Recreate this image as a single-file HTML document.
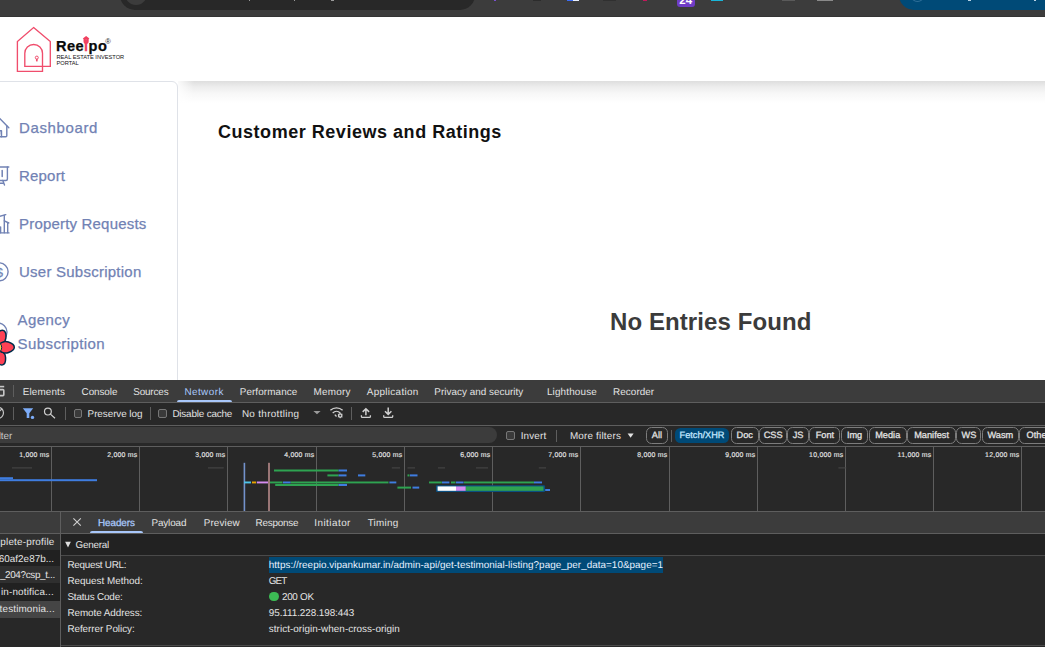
<!DOCTYPE html>
<html><head><meta charset="utf-8"><title>Reeipo</title>
<style>
*{box-sizing:border-box;margin:0;padding:0}
html,body{width:1045px;height:647px;overflow:hidden;background:#fff}
body{position:relative;font-family:"Liberation Sans",sans-serif}
.abs{position:absolute}
.t{position:absolute;white-space:nowrap;line-height:1}
/* browser chrome */
#chrome{left:0;top:0;width:1045px;height:17px;background:#3c3c3c;border-bottom:1px solid #343434;overflow:hidden}
#omni{left:120px;top:-20px;width:355px;height:30px;border-radius:15px;background:#282828}
#site{left:125px;top:-17px;width:22px;height:22px;border-radius:11px;background:#3c3c3c}
#profile{left:899px;top:-20px;width:170px;height:30px;border-radius:15px;background:#004a77}
/* page */
#header{left:0;top:17px;width:1045px;height:64px;background:#fff}
#main{left:178px;top:81px;width:867px;height:299px;background:#fff}
#shadow{left:178px;top:81px;width:867px;height:22px;background:linear-gradient(to right,rgba(255,255,255,.85),rgba(255,255,255,0) 16px),linear-gradient(#dedede,#ececec 25%,#f7f7f7 55%,#fff)}
#side{left:-2px;top:81px;width:180px;height:305px;background:#fff;border:1px solid #dfe2e8;border-radius:0 6px 0 0}
.nav{color:#7182b4;font-size:15px;-webkit-text-stroke:.25px #7182b4}
/* devtools */
#dt{left:0;top:380px;width:1045px;height:267px;background:#282828;color:#e3e3e3;font-size:9.9px;letter-spacing:0;overflow:hidden;text-rendering:geometricPrecision}
#dt .t{color:#e3e3e3}
.pill{border-radius:5.5px;font-weight:400;-webkit-text-stroke:.28px currentColor;font-size:9.2px;letter-spacing:0;line-height:14.6px;white-space:nowrap;overflow:hidden}
.tick{text-align:right;font-size:6.9px;letter-spacing:.25px;line-height:8px;-webkit-text-stroke:.15px #e3e3e3}
</style></head><body>
<div class="abs" id="chrome"><div class="abs" id="omni"></div><div class="abs" id="site"></div><div class="abs" id="profile"></div>
<div class="abs" style="left:248.5px;top:0;width:1.6px;height:1px;background:#9a9a9a"></div><div class="abs" style="left:293.5px;top:0;width:1.6px;height:1px;background:#9a9a9a"></div><div class="abs" style="left:330.5px;top:0;width:3px;height:1px;background:#9a9a9a"></div>
<div class="abs" style="left:967.5px;top:0;width:3px;height:1.4px;background:#b9d3e4"></div><div class="abs" style="left:1034px;top:0;width:2px;height:1.4px;background:#b9d3e4"></div>
<div class="abs" style="left:911px;top:-10px;width:13px;height:12px;border-radius:50%;border:1px solid #2f6f98"></div>
<div class="abs" style="left:494px;top:0;width:2px;height:1px;background:#7a4fd0"></div><div class="abs" style="left:533px;top:0;width:8px;height:1px;background:#2c2c2c"></div><div class="abs" style="left:603px;top:0;width:13px;height:1px;background:#303030"></div>
<div class="abs" style="left:677px;top:-8px;width:18px;height:14.5px;border-radius:3px;background:#6f3cc6"></div>
<div class="t" style="left:679.3px;top:-4.9px;font-size:11.5px;font-weight:700;color:#fff">24</div>
<div class="abs" style="left:567px;top:0;width:6px;height:1px;background:#3b6cf6"></div><div class="abs" style="left:573px;top:0;width:6px;height:1px;background:#e8eefc"></div>
<div class="abs" style="left:643px;top:0;width:4px;height:1px;background:#c2185b"></div>
<div class="abs" style="left:711px;top:0;width:12px;height:1px;background:#19b5d8"></div>
<div class="abs" style="left:782px;top:0;width:13px;height:1px;background:#5a5a5a"></div>
<div class="abs" style="left:817px;top:0;width:16px;height:1px;background:#8a8a8a"></div>
</div>
<div class="abs" id="header"></div>
<div class="abs" id="main"></div>
<div class="abs" id="shadow"></div>
<div class="abs" id="side"></div>
<!--LOGO-->
<svg class="abs" style="left:0;top:17px" width="180" height="64" viewBox="0 17 180 64">
<path d="M33.6 27.6 L50.3 41.5 V66.4 H24.8 V53.3 A8.85 8.85 0 0 1 42.5 53.3 V71.3 H17.4 V41.5 Z" fill="none" stroke="#f04d6c" stroke-width="1.35" stroke-linejoin="miter"/>
<circle cx="36.8" cy="57.6" r="1.5" fill="none" stroke="#f04d6c" stroke-width="1"/>
<path d="M36.8 59 V61.4" stroke="#f04d6c" stroke-width="1.7"/>
<path d="M86.1 35.9 L89.4 38.5 L88.7 38.9 V41.2 a2.6 2.6 0 0 1 -5.2 0 V38.9 L82.8 38.5 Z" fill="#f0405f"/>
<rect x="85.5" y="39.6" width="1.2" height="1.6" rx=".4" fill="#f9a9b8"/>
</svg>
<div class="t" style="left:56px;top:38.5px;font-size:14.6px;font-weight:700;color:#0a0a0a;letter-spacing:.43px;-webkit-text-stroke:.25px #0a0a0a">Ree<span style="color:#f0405f;-webkit-text-stroke:.25px #f0405f">i</span>po</div>
<div class="t" style="left:105.3px;top:37.8px;font-size:7.5px;color:#222">®</div>
<div class="t" style="left:56.5px;top:55px;font-size:5.7px;color:#111;letter-spacing:-.02px">REAL ESTATE INVESTOR</div>
<div class="t" style="left:56.5px;top:61px;font-size:5.7px;color:#111">PORTAL</div>
<!--/LOGO-->
<!--NAV-->
<svg class="abs" style="left:0;top:110px" width="16" height="280" viewBox="0 110 16 280" fill="none" stroke="#7182b4" stroke-width="1.4" stroke-linecap="round" stroke-linejoin="round">
<path d="M-1 117.8 L8.8 127.8"/><path d="M6.8 126 V135.8 a1 1 0 0 1 -1 1 H-1"/><path d="M-1 130.7 H1.5 V136.8" fill="#cfd5e6"/>
<path d="M-1 167 H8.8"/><path d="M7.4 167 V179 a1.5 1.5 0 0 1 -1.5 1.5 H-1"/><path d="M2.2 170.6 V176.4" stroke-width="1.5"/><path d="M2.8 180.5 L4.5 185"/><path d="M-1 183.2 H3.5"/>
<path d="M-1 216.6 L5.8 214.7"/><path d="M4.3 215.3 V232.8"/><path d="M4.3 220.8 L8.8 223"/><path d="M7.7 222.6 V232.8"/><path d="M-1 232.9 H9"/><path d="M.6 227 V232.8"/>
<circle cx="-.9" cy="271.8" r="9"/>
<circle cx="-2" cy="332" r="9"/>
</svg>
<div class="t" style="left:-4.3px;top:265.6px;font-size:13px;color:#7182b4;-webkit-text-stroke:.3px #7182b4">$</div>
<div class="t nav" style="left:19px;top:120px;letter-spacing:.62px">Dashboard</div>
<div class="t nav" style="left:19px;top:168px;letter-spacing:.2px">Report</div>
<div class="t nav" style="left:19px;top:216px;letter-spacing:.19px">Property Requests</div>
<div class="t nav" style="left:19px;top:264px;letter-spacing:.24px">User Subscription</div>
<div class="t nav" style="left:17.6px;top:312px;letter-spacing:.4px">Agency</div>
<div class="t nav" style="left:17.6px;top:336px;letter-spacing:.41px">Subscription</div>
<svg class="abs" style="left:0;top:325px" width="20" height="46" viewBox="0 325 20 46">
<g stroke="#002b49" stroke-width="1.5" fill="#ff4154" stroke-linejoin="round">
<path d="M2,0 C4,-5 9,-6.6 13,-5.2 C17,-3.7 18.8,-1.2 18.8,0 C18.8,1.2 17,3.7 13,5.2 C9,6.6 4,5 2,0 Z" transform="translate(-4.5 347.5) rotate(-64)"/>
<path d="M2,0 C4,-5 9,-6.6 13,-5.2 C17,-3.7 18.8,-1.2 18.8,0 C18.8,1.2 17,3.7 13,5.2 C9,6.6 4,5 2,0 Z" transform="translate(-4.5 347.5) rotate(66)"/>
<path d="M2,0 C4,-5 9,-6.6 13,-5.2 C17,-3.7 18.8,-1.2 18.8,0 C18.8,1.2 17,3.7 13,5.2 C9,6.6 4,5 2,0 Z" transform="translate(-4.5 347.5) rotate(-1)"/>
</g>
<circle cx="-4.5" cy="347.5" r="6.2" fill="#ffd94c" stroke="#002b49" stroke-width="1"/>
</svg>
<!--/NAV-->
<div class="t" style="left:218px;top:123px;font-size:18px;font-weight:700;color:#111;letter-spacing:.53px">Customer Reviews and Ratings</div>
<div class="t" style="left:610px;top:310px;font-size:24px;font-weight:700;color:#3b3b3b;letter-spacing:.09px">No Entries Found</div>
<div class="abs" id="dt">
<!--DT-->
<div class="abs" style="left:0px;top:0px;width:1045px;height:22px;background:#3c3c3c;"></div>
<div class="abs" style="left:0px;top:22px;width:1045px;height:1px;background:#5e5e5e;"></div>
<svg class="abs" style="left:0;top:5px" width="6" height="14" viewBox="0 385 6 14" fill="none" stroke="#c7c7c7" stroke-width="1.6"><path d="M-2 386.6 H4.2"/><rect x="-2" y="389.6" width="5.8" height="6" rx=".8"/></svg>
<div class="abs" style="left:13px;top:5px;width:1px;height:12px;background:#5e5e5e;"></div>
<div class="t" style="left:22.70px;top:6.8px;line-height:12px;letter-spacing:0.141px;">Elements</div>
<div class="t" style="left:81.60px;top:6.8px;line-height:12px;letter-spacing:-0.076px;">Console</div>
<div class="t" style="left:133.20px;top:6.8px;line-height:12px;letter-spacing:-0.133px;">Sources</div>
<div class="t" style="left:184.40px;top:6.8px;line-height:12px;letter-spacing:0.454px;color:#a8c7fa">Network</div>
<div class="abs" style="left:176.6px;top:20px;width:55.2px;height:2px;background:#a8c7fa;border-radius:2px 2px 0 0"></div>
<div class="t" style="left:239.70px;top:6.8px;line-height:12px;letter-spacing:0.106px;">Performance</div>
<div class="t" style="left:313.40px;top:6.8px;line-height:12px;letter-spacing:0.271px;">Memory</div>
<div class="t" style="left:366.80px;top:6.8px;line-height:12px;letter-spacing:0.317px;">Application</div>
<div class="t" style="left:434.30px;top:6.8px;line-height:12px;letter-spacing:0.032px;">Privacy and security</div>
<div class="t" style="left:546.90px;top:6.8px;line-height:12px;letter-spacing:0.177px;">Lighthouse</div>
<div class="t" style="left:613.10px;top:6.8px;line-height:12px;letter-spacing:0.059px;">Recorder</div>
<div class="abs" style="left:0px;top:23px;width:1045px;height:21.5px;background:#282828;"></div>
<div class="abs" style="left:0px;top:44.5px;width:1045px;height:1px;background:#5e5e5e;"></div>
<svg class="abs" style="left:0;top:23px" width="400" height="22" viewBox="0 403 400 22" fill="none">
<circle cx="-2.2" cy="412.8" r="5.7" stroke="#c7c7c7" stroke-width="1.2"/><path d="M-6 416.5 L1.8 409" stroke="#c7c7c7" stroke-width="1.2"/>
<path d="M22.8 408.2 H33.2 L29.3 413.2 V418 H26.7 V413.2 Z" fill="#7cacf8"/><circle cx="32.5" cy="417.4" r="1.7" fill="#7cacf8"/>
<circle cx="47.9" cy="411.6" r="3.4" stroke="#d0d0d0" stroke-width="1.2"/><path d="M50.4 414.1 L55 418.3" stroke="#d0d0d0" stroke-width="1.2"/>
<path d="M313.4 411 h7.2 l-3.6 3.3 z" fill="#9a9a9a"/>
<path d="M330.4 410.2 a9 9 0 0 1 12.2 0" stroke="#d0d0d0" stroke-width="1.3"/><path d="M332.7 412.9 a5.6 5.6 0 0 1 7.6 0" stroke="#d0d0d0" stroke-width="1.3"/><path d="M334.8 414.6 l1.7 1.9" stroke="#d0d0d0" stroke-width="1.3"/>
<circle cx="340.2" cy="415.6" r="1.7" fill="#282828" stroke="#d0d0d0" stroke-width="1.3"/>
<path d="M340.2 412.9v5.4M337.9 414.2l4.6 2.8M337.9 417l4.6-2.8" stroke="#d0d0d0" stroke-width=".8"/><circle cx="340.2" cy="415.6" r=".8" fill="#282828"/>
<path d="M365.9 415.3 V409 M362.7 411.9 L365.9 408.7 L369.1 411.9" stroke="#d0d0d0" stroke-width="1.5"/><path d="M361.4 415.3 V416.4 a1 1 0 0 0 1 1 H369.4 a1 1 0 0 0 1 -1 V415.3" stroke="#d0d0d0" stroke-width="1.3"/>
<path d="M388.2 407.6 V414 M385 411.2 L388.2 414.4 L391.4 411.2" stroke="#d0d0d0" stroke-width="1.5"/><path d="M383.7 415.3 V416.4 a1 1 0 0 0 1 1 H391.7 a1 1 0 0 0 1 -1 V415.3" stroke="#d0d0d0" stroke-width="1.3"/>
</svg>
<div class="abs" style="left:13px;top:27px;width:1px;height:13px;background:#5e5e5e;"></div>
<div class="abs" style="left:65px;top:27px;width:1px;height:13px;background:#5e5e5e;"></div>
<div class="abs" style="left:149.5px;top:27px;width:1px;height:13px;background:#5e5e5e;"></div>
<div class="abs" style="left:351px;top:27px;width:1px;height:13px;background:#5e5e5e;"></div>
<div class="abs" style="left:73.5px;top:29.2px;width:8.6px;height:8.6px;background:#3a3a3a;border:1px solid #777;border-radius:2px"></div>
<div class="t" style="left:87.60px;top:29.1px;line-height:12px;letter-spacing:-0.053px;">Preserve log</div>
<div class="abs" style="left:158px;top:29.2px;width:8.6px;height:8.6px;background:#3a3a3a;border:1px solid #777;border-radius:2px"></div>
<div class="t" style="left:172.40px;top:29.1px;line-height:12px;letter-spacing:-0.179px;">Disable cache</div>
<div class="t" style="left:241.90px;top:29.1px;line-height:12px;letter-spacing:0.327px;">No throttling</div>
<div class="abs" style="left:0px;top:45.5px;width:1045px;height:21px;background:#282828;"></div>
<div class="abs" style="left:-10px;top:46.8px;width:507px;height:16.6px;background:#3c3c3c;border-radius:8.3px"></div>
<div class="t" style="left:-9.6px;top:50.7px;line-height:12px;color:#c7c7c7">Filter</div>
<div class="abs" style="left:506.3px;top:51px;width:8.6px;height:8.6px;background:#3a3a3a;border:1px solid #777;border-radius:2px"></div>
<div class="t" style="left:520.70px;top:50.9px;line-height:12px;letter-spacing:0.166px;">Invert</div>
<div class="abs" style="left:556px;top:49.5px;width:1px;height:12px;background:#5e5e5e;"></div>
<div class="t" style="left:569.90px;top:50.9px;line-height:12px;letter-spacing:0.196px;">More filters</div>
<svg class="abs" style="left:626px;top:52px" width="10" height="8" viewBox="626 432 10 8"><path d="M627.6 433.6 h6 l-3 4.2 z" fill="#e3e3e3"/></svg>
<div class="abs" style="left:671px;top:49.5px;width:1px;height:12px;background:#5e5e5e;"></div>
<div class="abs pill" style="left:645.7px;top:47.0px;width:22.5px;height:16.6px;border:1px solid #7c7c7c;color:#e3e3e3;text-align:center;">All</div>
<div class="abs pill" style="left:675px;top:48.2px;width:54px;height:14.6px;border-radius:5.5px;background:#004a77;color:#c2e7ff;line-height:14.6px;text-align:center">Fetch/XHR</div>
<div class="abs pill" style="left:730.6px;top:47.0px;width:28.4px;height:16.6px;border:1px solid #7c7c7c;color:#e3e3e3;text-align:center;">Doc</div>
<div class="abs pill" style="left:759.4px;top:47.0px;width:27.6px;height:16.6px;border:1px solid #7c7c7c;color:#e3e3e3;text-align:center;">CSS</div>
<div class="abs pill" style="left:787.3px;top:47.0px;width:21.6px;height:16.6px;border:1px solid #7c7c7c;color:#e3e3e3;text-align:center;">JS</div>
<div class="abs pill" style="left:809.4px;top:47.0px;width:31.1px;height:16.6px;border:1px solid #7c7c7c;color:#e3e3e3;text-align:center;">Font</div>
<div class="abs pill" style="left:840.8px;top:47.0px;width:27.5px;height:16.6px;border:1px solid #7c7c7c;color:#e3e3e3;text-align:center;">Img</div>
<div class="abs pill" style="left:868.8px;top:47.0px;width:37.9px;height:16.6px;border:1px solid #7c7c7c;color:#e3e3e3;text-align:center;">Media</div>
<div class="abs pill" style="left:907.2px;top:47.0px;width:48.8px;height:16.6px;border:1px solid #7c7c7c;color:#e3e3e3;text-align:center;">Manifest</div>
<div class="abs pill" style="left:956.4px;top:47.0px;width:25.0px;height:16.6px;border:1px solid #7c7c7c;color:#e3e3e3;text-align:center;">WS</div>
<div class="abs pill" style="left:981.8px;top:47.0px;width:37.0px;height:16.6px;border:1px solid #7c7c7c;color:#e3e3e3;text-align:center;">Wasm</div>
<div class="abs pill" style="left:1019.3px;top:47.0px;width:39.7px;height:16.6px;border:1px solid #7c7c7c;color:#e3e3e3;text-align:left;padding-left:6.3px;">Other</div>
<div class="abs" style="left:0px;top:66px;width:1045px;height:1px;background:#5e5e5e;"></div>
<div class="abs" style="left:51px;top:67px;width:1px;height:64px;background:#5e5e5e;"></div>
<div class="t tick" style="left:-10.5px;top:71.7px;width:60px">1,000 ms</div>
<div class="abs" style="left:139px;top:67px;width:1px;height:64px;background:#5e5e5e;"></div>
<div class="t tick" style="left:77.5px;top:71.7px;width:60px">2,000 ms</div>
<div class="abs" style="left:227px;top:67px;width:1px;height:64px;background:#5e5e5e;"></div>
<div class="t tick" style="left:165.5px;top:71.7px;width:60px">3,000 ms</div>
<div class="abs" style="left:316px;top:67px;width:1px;height:64px;background:#5e5e5e;"></div>
<div class="t tick" style="left:254.5px;top:71.7px;width:60px">4,000 ms</div>
<div class="abs" style="left:404px;top:67px;width:1px;height:64px;background:#5e5e5e;"></div>
<div class="t tick" style="left:342.5px;top:71.7px;width:60px">5,000 ms</div>
<div class="abs" style="left:492px;top:67px;width:1px;height:64px;background:#5e5e5e;"></div>
<div class="t tick" style="left:430.5px;top:71.7px;width:60px">6,000 ms</div>
<div class="abs" style="left:580px;top:67px;width:1px;height:64px;background:#5e5e5e;"></div>
<div class="t tick" style="left:518.5px;top:71.7px;width:60px">7,000 ms</div>
<div class="abs" style="left:669px;top:67px;width:1px;height:64px;background:#5e5e5e;"></div>
<div class="t tick" style="left:607.5px;top:71.7px;width:60px">8,000 ms</div>
<div class="abs" style="left:757px;top:67px;width:1px;height:64px;background:#5e5e5e;"></div>
<div class="t tick" style="left:695.5px;top:71.7px;width:60px">9,000 ms</div>
<div class="abs" style="left:845px;top:67px;width:1px;height:64px;background:#5e5e5e;"></div>
<div class="t tick" style="left:783.5px;top:71.7px;width:60px">10,000 ms</div>
<div class="abs" style="left:933px;top:67px;width:1px;height:64px;background:#5e5e5e;"></div>
<div class="t tick" style="left:871.5px;top:71.7px;width:60px">11,000 ms</div>
<div class="abs" style="left:1021px;top:67px;width:1px;height:64px;background:#5e5e5e;"></div>
<div class="t tick" style="left:959.5px;top:71.7px;width:60px">12,000 ms</div>
<svg class="abs" style="left:0;top:80px" width="1045" height="52" viewBox="0 460 1045 52"><rect x="12" y="467.4" width="20" height="1" fill="#4a4a4a"/><rect x="208" y="467.4" width="15.7" height="1" fill="#4a4a4a"/><rect x="391.8" y="467.4" width="8.2" height="1" fill="#4a4a4a"/><rect x="407.5" y="467.4" width="7.5" height="1" fill="#4a4a4a"/><rect x="438" y="467.4" width="7" height="1" fill="#4a4a4a"/><rect x="476" y="467.4" width="12" height="1" fill="#4a4a4a"/><rect x="538.8" y="467.4" width="7.2" height="1" fill="#4a4a4a"/><rect x="838.4" y="467.4" width="7.9" height="1" fill="#4a4a4a"/><rect x="0" y="477.2" width="13" height="2" fill="#3f7de0"/><rect x="0" y="479.2" width="97" height="2" fill="#3f7de0"/><rect x="243.6" y="462.8" width="1.6" height="48.2" fill="#7392cb"/><rect x="268" y="462.8" width="2" height="48.2" fill="#9a7676"/><rect x="274" y="469.5" width="64.6" height="2" fill="#2ea351"/><rect x="338.6" y="469.5" width="8.4" height="2" fill="#3f7de0"/><rect x="327.4" y="474.4" width="11.2" height="2" fill="#2ea351"/><rect x="338.6" y="474.4" width="7.9" height="2" fill="#3f7de0"/><rect x="358" y="474.4" width="7.3" height="2" fill="#3f7de0"/><rect x="407.5" y="474.4" width="2.0" height="2" fill="#2ea351"/><rect x="410" y="474.4" width="7.5" height="2" fill="#3f7de0"/><rect x="244" y="481.5" width="7" height="1.9" fill="#4fc3e8"/><rect x="252" y="481.5" width="4" height="1.9" fill="#e8a400"/><rect x="256.8" y="481.5" width="11.2" height="1.9" fill="#d58cf0"/><rect x="270" y="481.5" width="12.5" height="1.9" fill="#2ea351"/><rect x="283" y="481.5" width="7.7" height="1.9" fill="#3f7de0"/><rect x="290.7" y="481.5" width="97.8" height="1.9" fill="#2ea351"/><rect x="389.4" y="481.5" width="6.9" height="1.9" fill="#3f7de0"/><rect x="429" y="481.5" width="12.8" height="1.9" fill="#2ea351"/><rect x="442" y="481.5" width="7.4" height="1.9" fill="#3f7de0"/><rect x="451" y="481.5" width="4.5" height="1.9" fill="#2ea351"/><rect x="456" y="481.5" width="7.6" height="1.9" fill="#3f7de0"/><rect x="464" y="481.5" width="70" height="1.9" fill="#2ea351"/><rect x="534" y="481.5" width="8" height="1.9" fill="#3f7de0"/><rect x="275.2" y="483.9" width="63.4" height="2.1" fill="#2ea351"/><rect x="338.6" y="483.9" width="8.4" height="2.1" fill="#3f7de0"/><rect x="397.4" y="486.6" width="13.6" height="2" fill="#2ea351"/><rect x="412.5" y="486.6" width="6.7" height="2" fill="#3f7de0"/><rect x="436" y="485.3" width="109" height="6.6" fill="#0b4f80" rx="1"/><rect x="437.6" y="486.4" width="18.4" height="4.4" fill="#ffffff"/><rect x="456" y="486.4" width="9.8" height="4.4" fill="#d58cf0"/><rect x="465.8" y="486.4" width="77.7" height="4.4" fill="#2ea351"/><rect x="545.2" y="489" width="4.8" height="2" fill="#3f7de0"/></svg>
<div class="abs" style="left:0px;top:131px;width:1045px;height:1px;background:#5e5e5e;"></div>
<div class="abs" style="left:0px;top:132px;width:1045px;height:21.5px;background:#3c3c3c;"></div>
<div class="abs" style="left:0px;top:153.3px;width:1045px;height:1px;background:#5e5e5e;"></div>
<div class="abs" style="left:60px;top:132px;width:1px;height:135px;background:#5e5e5e;"></div>
<div class="abs" style="left:0px;top:154.3px;width:60px;height:15.6px;background:#2f2f2f;"></div>
<div class="abs" style="left:0px;top:169.9px;width:60px;height:16.4px;background:#212121;"></div>
<div class="abs" style="left:0px;top:186.3px;width:60px;height:16.8px;background:#2f2f2f;"></div>
<div class="abs" style="left:0px;top:203.1px;width:60px;height:17.5px;background:#212121;"></div>
<div class="abs" style="left:0px;top:220.6px;width:60px;height:17.2px;background:#454545;"></div>
<div class="t" style="left:0.30px;top:157.1px;line-height:12px;letter-spacing:0.199px;">plete-profile</div>
<div class="t" style="left:-1.30px;top:173.75px;line-height:12px;letter-spacing:0.040px;">60af2e87b...</div>
<div class="t" style="left:-0.10px;top:190.4px;line-height:12px;letter-spacing:-0.338px;">_204?csp_t...</div>
<div class="t" style="left:1.00px;top:207.05px;line-height:12px;letter-spacing:0.164px;">in-notifica...</div>
<div class="t" style="left:-0.40px;top:223.7px;line-height:12px;letter-spacing:0.150px;">testimonia...</div>
<svg class="abs" style="left:71px;top:137px" width="12" height="12" viewBox="71 517 12 12"><path d="M73.4 518.3 L80.8 525.7 M80.8 518.3 L73.4 525.7" stroke="#d0d0d0" stroke-width="1.1"/></svg>
<div class="t" style="left:97.90px;top:138.1px;line-height:12px;letter-spacing:-0.033px;color:#a8c7fa;-webkit-text-stroke:.3px #a8c7fa;">Headers</div>
<div class="abs" style="left:90.4px;top:150.8px;width:52.3px;height:2.5px;background:#a8c7fa;border-radius:2px 2px 0 0"></div>
<div class="t" style="left:151.40px;top:138.1px;line-height:12px;letter-spacing:-0.098px;">Payload</div>
<div class="t" style="left:203.70px;top:138.1px;line-height:12px;letter-spacing:0.154px;">Preview</div>
<div class="t" style="left:255.50px;top:138.1px;line-height:12px;letter-spacing:-0.221px;">Response</div>
<div class="t" style="left:314.20px;top:138.1px;line-height:12px;letter-spacing:0.479px;">Initiator</div>
<div class="t" style="left:367.70px;top:138.1px;line-height:12px;letter-spacing:0.239px;">Timing</div>
<div class="abs" style="left:61px;top:154.3px;width:984px;height:20.7px;background:#222222;"></div>
<svg class="abs" style="left:64px;top:160px" width="8" height="8" viewBox="64 540 8 8"><path d="M65.1 541.8 h5.8 l-2.9 5.8 z" fill="#dedede"/></svg>
<div class="t" style="left:75.50px;top:160.1px;line-height:12px;letter-spacing:-0.249px;">General</div>
<div class="abs" style="left:61px;top:175px;width:984px;height:1px;background:#4a4a4a;"></div>
<div class="abs" style="left:268.5px;top:177.2px;width:394.8px;height:15.4px;background:#004a77;"></div>
<div class="t" style="left:67.40px;top:180.2px;line-height:12px;letter-spacing:-0.269px;">Request URL:</div>
<div class="t" style="left:268.80px;top:180.2px;line-height:12px;letter-spacing:0.039px;color:#e8f1ff;">https://reepio.vipankumar.in/admin-api/get-testimonial-listing?page_per_data=10&amp;page=1</div>
<div class="t" style="left:67.40px;top:196.2px;line-height:12px;letter-spacing:0.005px;">Request Method:</div>
<div class="t" style="left:268.80px;top:196.2px;line-height:12px;letter-spacing:-0.871px;">GET</div>
<div class="t" style="left:67.40px;top:212.2px;line-height:12px;letter-spacing:-0.158px;">Status Code:</div>
<div class="abs" style="left:269.4px;top:212.2px;width:9.2px;height:9.2px;background:#3cba54;border-radius:50%"></div>
<div class="t" style="left:281.90px;top:212.2px;line-height:12px;letter-spacing:-0.250px;">200 OK</div>
<div class="t" style="left:67.40px;top:228.2px;line-height:12px;letter-spacing:-0.057px;">Remote Address:</div>
<div class="t" style="left:268.80px;top:228.2px;line-height:12px;letter-spacing:-0.061px;">95.111.228.198:443</div>
<div class="t" style="left:67.40px;top:244.2px;line-height:12px;letter-spacing:-0.053px;">Referrer Policy:</div>
<div class="t" style="left:268.80px;top:244.2px;line-height:12px;letter-spacing:0.051px;">strict-origin-when-cross-origin</div>
<div class="abs" style="left:61px;top:264.6px;width:984px;height:1px;background:#4a4a4a;"></div>
<!--/DT-->
</div>
</body></html>
